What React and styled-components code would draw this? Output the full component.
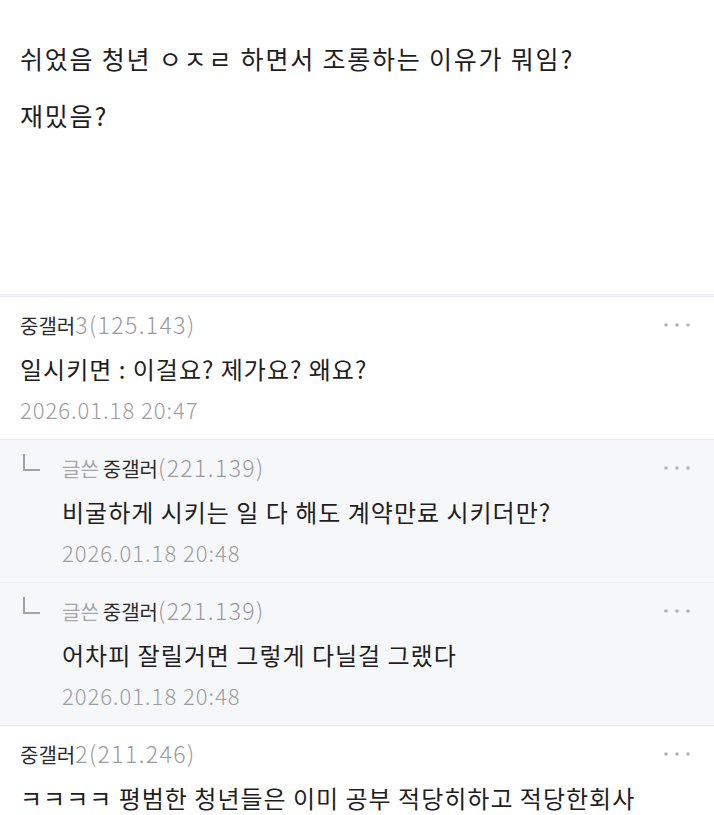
import React from 'react';
import styled, { createGlobalStyle } from 'styled-components';

const GlobalStyle = createGlobalStyle`
  html, body {
    margin: 0;
    padding: 0;
    background: #ffffff;
  }
  body {
    font-family: 'Noto Sans CJK KR', 'Noto Sans', sans-serif;
    color: #222;
  }
`;

const Page = styled.div`
  width: 714px;
  overflow: hidden;
`;

const Post = styled.div`
  box-sizing: border-box;
  min-height: 296px;
  padding: 41px 20px 0;
  border-bottom: 2px solid #f2f2f4;
`;

const PostLine = styled.p`
  margin: 0 0 23px;
  font-size: 25px;
  line-height: 34px;
  letter-spacing: 1.8px;
  color: #1e1e1e;
`;

const Comment = styled.div`
  display: grid;
  grid-template-columns: ${(p) => (p.$reply ? '42px 1fr' : '1fr')};
  padding: 14px 20px 16px;
  border-top: 1px solid #ececf0;
  background: ${(p) => (p.$reply ? '#f6f7f9' : '#ffffff')};
`;

const Gutter = styled.div`
  padding-top: 0;
`;

const ReplyMark = styled.span`
  display: block;
  width: 15px;
  height: 15px;
  margin-left: 3px;
  border-left: 2px solid #a3a3a6;
  border-bottom: 2px solid #a3a3a6;
`;

const Main = styled.div`
  min-width: 0;
`;

const Head = styled.div`
  display: flex;
  align-items: center;
  justify-content: space-between;
  height: 28px;
`;

const Who = styled.div`
  font-size: 20px;
  line-height: 28px;
  white-space: nowrap;
`;

const Writer = styled.span`
  color: #a6a6a9;
  margin-right: 4px;
`;

const Nick = styled.span`
  color: #2a2a2a;
`;

const Ip = styled.span`
  color: #9a9a9d;
  font-size: 23px;
  font-weight: 300;
  letter-spacing: 1.4px;
`;

const More = styled.svg`
  width: 28px;
  height: 6px;
  flex: none;
  margin-right: 3px;
`;

const Body = styled.div`
  margin-top: 14px;
  font-size: 24px;
  line-height: 32px;
  letter-spacing: 1px;
  color: #1e1e1e;
  white-space: nowrap;
`;

const Stamp = styled.div`
  margin-top: 10px;
  font-size: 22px;
  line-height: 28px;
  letter-spacing: 1px;
  color: #9d9da0;
  font-weight: 300;
`;

const comments = [
  { nick: '중갤러', ip: '3(125.143)', body: '일시키면 : 이걸요? 제가요? 왜요?', date: '2026.01.18 20:47' },
  { reply: true, writer: true, nick: '중갤러', ip: '(221.139)', body: '비굴하게 시키는 일 다 해도 계약만료 시키더만?', date: '2026.01.18 20:48' },
  { reply: true, writer: true, nick: '중갤러', ip: '(221.139)', body: '어차피 잘릴거면 그렇게 다닐걸 그랬다', date: '2026.01.18 20:48' },
  { nick: '중갤러', ip: '2(211.246)', body: 'ㅋㅋㅋㅋ 평범한 청년들은 이미 공부 적당히하고 적당한회사', date: '2026.01.18 20:49' },
];

const MoreIcon = () => (
  <More viewBox="0 0 28 6">
    <circle cx="3" cy="3" r="1.8" fill="#b3b3b6" />
    <circle cx="14" cy="3" r="1.8" fill="#b3b3b6" />
    <circle cx="25" cy="3" r="1.8" fill="#b3b3b6" />
  </More>
);

const CommentItem = ({ c }) => (
  <Comment $reply={c.reply}>
    {c.reply && (
      <Gutter>
        <ReplyMark />
      </Gutter>
    )}
    <Main>
      <Head>
        <Who>
          {c.writer && <Writer>글쓴</Writer>}
          <Nick>{c.nick}</Nick>
          <Ip>{c.ip}</Ip>
        </Who>
        <MoreIcon />
      </Head>
      <Body>{c.body}</Body>
      <Stamp>{c.date}</Stamp>
    </Main>
  </Comment>
);

export default function App() {
  return (
    <Page>
      <GlobalStyle />
      <Post>
        <PostLine>쉬었음 청년 ㅇㅈㄹ 하면서 조롱하는 이유가 뭐임?</PostLine>
        <PostLine>재밌음?</PostLine>
      </Post>
      {comments.map((c, i) => (
        <CommentItem key={i} c={c} />
      ))}
    </Page>
  );
}
